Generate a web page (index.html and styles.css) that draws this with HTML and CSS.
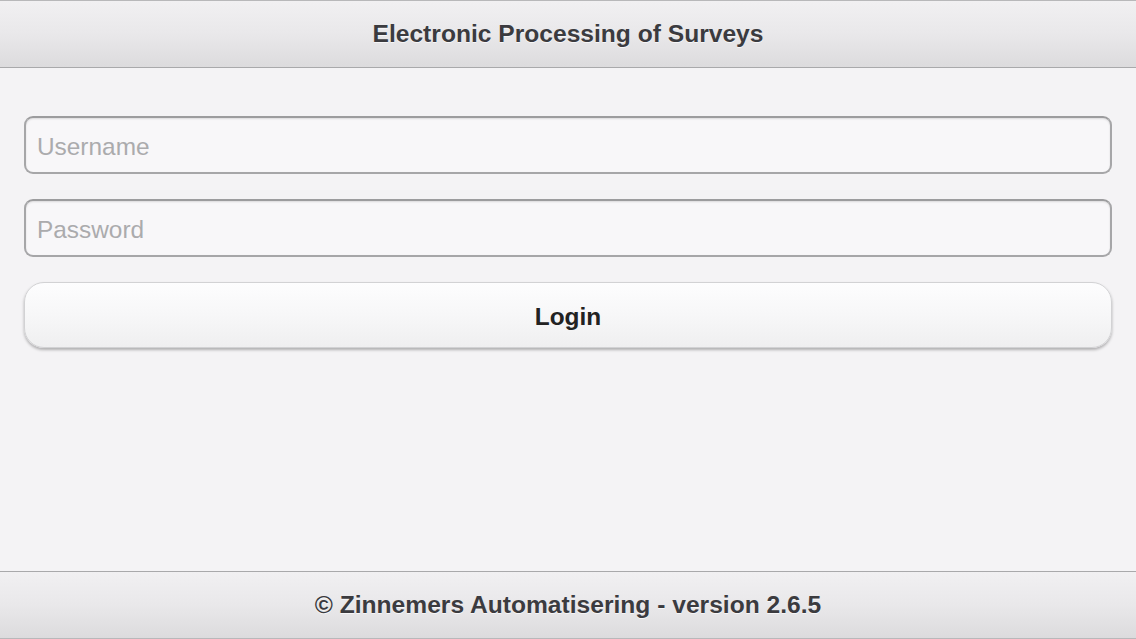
FILE: index.html
```html
<!DOCTYPE html>
<html lang="en">
<head>
<meta charset="utf-8">
<title>Electronic Processing of Surveys</title>
<link rel="stylesheet" href="styles.css">
</head>
<body>
<div class="page">
  <header class="bar bar-top">
    <h1 class="bar-title">Electronic Processing of Surveys</h1>
  </header>
  <main class="content">
    <form class="login-form">
      <input class="field" type="text" placeholder="Username">
      <input class="field" type="password" placeholder="Password">
      <button class="btn" type="button">Login</button>
    </form>
  </main>
  <footer class="bar bar-bottom">
    <p class="bar-title">© Zinnemers Automatisering - version 2.6.5</p>
  </footer>
</div>
</body>
</html>
```

FILE: styles.css
```css
* { box-sizing: border-box; }
html, body {
  margin: 0;
  padding: 0;
  height: 100%;
}
body {
  background: #f4f3f5;
  font-family: "Liberation Sans", Arial, sans-serif;
  color: #3a3a3e;
}
.page {
  display: flex;
  flex-direction: column;
  height: 100vh;
}
.bar {
  flex: 0 0 auto;
  display: flex;
  align-items: center;
  justify-content: center;
  background: linear-gradient(#f1f0f2, #e9e8ea 50%, #dcdbdd);
}
.bar-top {
  height: 68px;
  border-top: 1px solid #b8b8ba;
  border-bottom: 1px solid #a9a9ab;
}
.bar-bottom {
  height: 68px;
  border-top: 1px solid #a9a9ab;
  border-bottom: 1px solid #b8b8ba;
}
.bar-title {
  margin: 0;
  font-size: 24.6px;
  font-weight: bold;
  color: #3b3b3f;
  text-shadow: 0 1px 0 rgba(255,255,255,0.7);
}
.content {
  flex: 1 1 auto;
  padding: 48px 24px 0;
  background: #f4f3f5;
}
.login-form {
  display: flex;
  flex-direction: column;
}
.field {
  height: 58px;
  width: 100%;
  padding: 3px 11px 0;
  margin-bottom: 25px;
  border: 2px solid #a6a6a8;
  border-top-color: #9c9c9e;
  border-radius: 9px;
  background: #f8f7f9;
  font-family: "Liberation Sans", Arial, sans-serif;
  font-size: 24.4px;
  color: #333;
  outline: none;
  box-shadow: inset 0 1px 2px rgba(0,0,0,0.12);
}
.field::placeholder {
  color: #ababad;
}
.btn {
  height: 66px;
  width: 100%;
  padding: 4px 0 0;
  border: 1px solid #d2d2d4;
  border-radius: 20px;
  background: linear-gradient(#fdfdfe, #f7f7f8 50%, #efeff0);
  box-shadow: 0 2px 3px rgba(0,0,0,0.28);
  font-family: "Liberation Sans", Arial, sans-serif;
  font-size: 24.4px;
  font-weight: bold;
  color: #222;
  cursor: pointer;
}
```
